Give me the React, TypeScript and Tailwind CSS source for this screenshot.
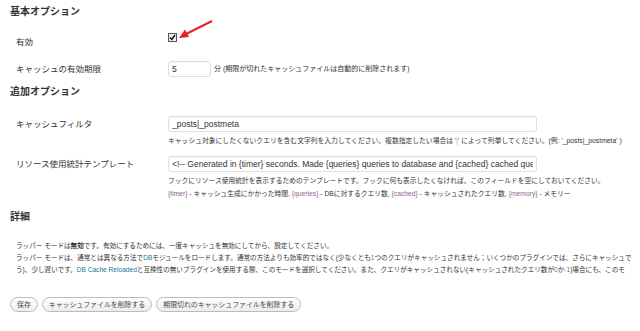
import React from "react";

// Settings screen for the DB cache plugin (Japanese locale).
const Tok = ({ children }: { children: React.ReactNode }) => (
  <span className="text-[#8e5f8e]">{children}</span>
);

function Heading({ children }: { children: React.ReactNode }) {
  return (
    <h2 className="h-[14px] text-[10px] leading-[14px] font-semibold text-[#333]">
      {children}
    </h2>
  );
}

function TextBox({ value, width }: { value: string; width: string }) {
  return (
    <input
      readOnly
      value={value}
      className={`${width} block h-[16px] rounded-[3px] border border-[#dfdfdf] bg-white px-[3px] text-[8.5px] text-[#333] shadow-[inset_0_1px_1px_rgba(0,0,0,0.04)] outline-none [font-family:'Liberation_Sans','Noto_Sans_CJK_JP',sans-serif]`}
    />
  );
}

function PillButton({ children }: { children: React.ReactNode }) {
  return (
    <button className="h-[15px] rounded-full border border-[#bbb] bg-gradient-to-b from-white to-[#ededed] px-[6px] text-[6.9px] leading-[13px] text-[#464646]">
      {children}
    </button>
  );
}

export default function App() {
  return (
    <div className="relative h-[331px] w-[640px] overflow-hidden bg-white pt-[5px] pl-[10px] text-[#333] [font-family:'Liberation_Sans','Noto_Sans_CJK_JP',sans-serif]">
      <Heading>基本オプション</Heading>

      <div className="mt-[9px] pl-[6px]">
        <div className="flex h-[28px] items-center">
          <div className="w-[152px] text-[8.5px]">有効</div>
          <div className="-mt-[9px] flex h-[9px] w-[9px] items-center justify-center border border-[#555] bg-[#eee]">
            <svg width="7" height="7" viewBox="0 0 7 7">
              <path d="M1 3.5 L2.8 5.5 L6 1" stroke="#111" strokeWidth="1.4" fill="none" />
            </svg>
          </div>
        </div>
        <div className="flex h-[26px] items-center">
          <div className="w-[152px] text-[8.5px]">キャッシュの有効期限</div>
          <TextBox value="5" width="w-[43px]" />
          <span className="ml-[3px] text-[7px]">
            分 (期限が切れたキャッシュファイルは自動的に削除されます)
          </span>
        </div>
      </div>

      <div className="mt-[3px]">
        <Heading>追加オプション</Heading>
      </div>

      <div className="pl-[6px]">
        <div className="flex pt-[17px]">
          <div className="flex h-[16px] w-[152px] items-center text-[8.5px]">キャッシュフィルタ</div>
          <div>
            <TextBox value="_posts|_postmeta" width="w-[369px]" />
            <div className="mt-[3px] text-[6.8px] leading-[12px] whitespace-nowrap">
              キャッシュ対象にしたくないクエリを含む文字列を入力してください。複数指定したい場合は '
              <span className="text-[#d6a31c]">|</span>' によって列挙してください。(例: '_posts|_postmeta' )
            </div>
          </div>
        </div>

        <div className="flex pt-[9px]">
          <div className="flex h-[16px] w-[152px] items-center text-[8.5px]">
            リソース使用統計テンプレート
          </div>
          <div>
            <TextBox
              value="<!-- Generated in {timer} seconds. Made {queries} queries to database and {cached} cached queries. Memory used - {memory} -->"
              width="w-[369px]"
            />
            <div className="mt-[2px] text-[6.75px] leading-[13px] whitespace-nowrap">
              フックにリソース使用統計を表示するためのテンプレートです。フックに何も表示したくなければ、このフィールドを空にしておいてください。
            </div>
            <div className="text-[6.75px] leading-[13px] whitespace-nowrap">
              <Tok>{"{timer}"}</Tok> - キャッシュ生成にかかった時間, <Tok>{"{queries}"}</Tok> -
              DBに対するクエリ数, <Tok>{"{cached}"}</Tok> - キャッシュされたクエリ数,{" "}
              <Tok>{"{memory}"}</Tok> - メモリー
            </div>
          </div>
        </div>
      </div>

      <div className="mt-[10px]">
        <Heading>詳細</Heading>
      </div>

      <div className="mt-[16px] pl-[6px] text-[6.6px] leading-[12px] whitespace-nowrap">
        <p>
          ラッパー モードは<b>無効</b>です。有効にするためには、一度キャッシュを無効にしてから、設定してください。
        </p>
        <p>
          ラッパー モードは、通常とは異なる方法で<span className="text-[#21759b]">DB</span>
          モジュールをロードします。通常の方法よりも効率的ではなく(少なくとも
          <Tok>1</Tok>
          つのクエリがキャッシュされません；いくつかのプラグインでは、さらにキャッシュで
        </p>
        <p>
          う)、少し遅いです。<span className="text-[#21759b]">DB Cache Reloaded</span>
          と互換性の無いプラグインを使用する際、このモードを選択してください。また、クエリがキャッシュされない(キャッシュされたクエリ数が
          <Tok>0</Tok>か<Tok>-1</Tok>)場合にも、このモ
        </p>
      </div>

      <div className="mt-[21px] flex gap-[4px]">
        <PillButton>保存</PillButton>
        <PillButton>キャッシュファイルを削除する</PillButton>
        <PillButton>期限切れのキャッシュファイルを削除する</PillButton>
      </div>

      {/* red annotation arrow pointing at the checkbox */}
      <svg className="absolute top-0 left-0" width="640" height="331" viewBox="0 0 640 331">
        <line x1="212" y1="21" x2="186" y2="34" stroke="#e8201e" strokeWidth="2" />
        <polygon points="179,38 185,29.5 189,37" fill="#e8201e" />
      </svg>
    </div>
  );
}
